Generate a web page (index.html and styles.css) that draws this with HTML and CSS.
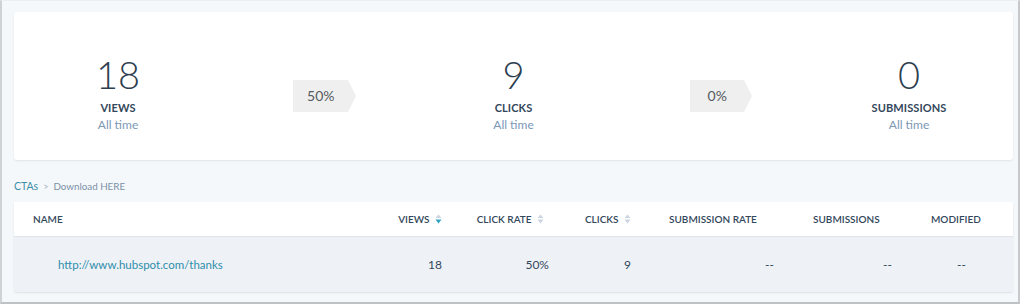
FILE: index.html
```html
<!DOCTYPE html>
<html lang="en">
<head>
<meta charset="utf-8">
<title>CTA performance</title>
<link rel="stylesheet" href="styles.css">
</head>
<body>
<div class="frame">
  <section class="summary">
    <div class="stat">
      <div class="num">18</div>
      <div class="label">VIEWS</div>
      <div class="sub">All time</div>
    </div>
    <div class="rate rate-1"><span class="badge">50%</span></div>
    <div class="stat">
      <div class="num">9</div>
      <div class="label">CLICKS</div>
      <div class="sub">All time</div>
    </div>
    <div class="rate rate-2"><span class="badge">0%</span></div>
    <div class="stat">
      <div class="num">0</div>
      <div class="label">SUBMISSIONS</div>
      <div class="sub">All time</div>
    </div>
  </section>

  <nav class="crumbs">
    <a class="crumb-link" href="#">CTAs</a>
    <span class="crumb-sep">&gt;</span>
    <span class="crumb-current">Download HERE</span>
  </nav>

  <div class="table">
    <div class="row head">
      <div class="cell c-name">NAME</div>
      <div class="cell c-views right">VIEWS
        <svg class="sort" viewBox="0 0 7 10" width="7" height="10"><path d="M3.5 0.5 L6.5 4 L0.5 4 Z" fill="#cbd6e2"/><path d="M0.5 5.5 L6.5 5.5 L3.5 9.5 Z" fill="#2fa5c4"/></svg>
      </div>
      <div class="cell c-rate right">CLICK RATE
        <svg class="sort" viewBox="0 0 7 10" width="7" height="10"><path d="M3.5 0.5 L6.5 4 L0.5 4 Z" fill="#cbd6e2"/><path d="M0.5 5.5 L6.5 5.5 L3.5 9.5 Z" fill="#cbd6e2"/></svg>
      </div>
      <div class="cell c-clicks right">CLICKS
        <svg class="sort" viewBox="0 0 7 10" width="7" height="10"><path d="M3.5 0.5 L6.5 4 L0.5 4 Z" fill="#cbd6e2"/><path d="M0.5 5.5 L6.5 5.5 L3.5 9.5 Z" fill="#cbd6e2"/></svg>
      </div>
      <div class="cell c-subrate">SUBMISSION RATE</div>
      <div class="cell c-subs">SUBMISSIONS</div>
      <div class="cell c-mod">MODIFIED</div>
    </div>
    <div class="row body">
      <div class="cell c-name"><a class="url" href="#">http://www.hubspot.com/thanks</a></div>
      <div class="cell c-views right">18</div>
      <div class="cell c-rate right v-rate">50%</div>
      <div class="cell c-clicks right">9</div>
      <div class="cell c-subrate right v-subrate">--</div>
      <div class="cell c-subs right v-subs">--</div>
      <div class="cell c-mod right v-mod">--</div>
    </div>
  </div>
</div>
</body>
</html>
```

FILE: styles.css
```css
* { box-sizing: border-box; }

html, body {
  margin: 0;
  padding: 0;
  background: #ffffff;
}

body {
  font-family: "Lato", "Open Sans", sans-serif;
  color: #33475b;
  width: 1024px;
  height: 307px;
  overflow: hidden;
}

.frame {
  width: 1020px;
  height: 304px;
  background: #f5f8fa;
  border-top: 1px solid #eceff2;
  border-left: 2px solid #cfd1d4;
  border-right: 2px solid #c6c8cb;
  border-bottom: 2px solid #bfc1c4;
  padding: 11px 5px 0 12px;
}

/* summary card */
.summary {
  background: #ffffff;
  border-radius: 3px;
  box-shadow: 0 1px 2px rgba(45, 62, 80, 0.10);
  height: 148px;
  display: grid;
  grid-template-columns: 208px 1fr 208px 1fr 208px;
  align-items: center;
}

.stat {
  display: flex;
  flex-direction: column;
  align-items: center;
  padding-top: 12px;
}

.num {
  font-size: 38px;
  font-weight: 300;
  line-height: 44px;
  color: #2d3e50;
}

.label {
  margin-top: 5px;
  font-size: 11px;
  font-weight: 700;
  line-height: 14px;
  letter-spacing: 0.1px;
  color: #33475b;
}

.sub {
  margin-top: 2px;
  font-size: 12px;
  line-height: 16px;
  color: #7c98b6;
}

.rate {
  display: flex;
  justify-content: center;
  padding-top: 20px;
}

.rate-1 { padding-left: 18px; }
.rate-2 { padding-left: 20px; }

.badge {
  position: relative;
  display: inline-block;
  height: 32px;
  line-height: 32px;
  background: #efefef;
  color: #555a60;
  font-size: 14px;
  text-align: center;
  margin-right: 8px;
}

.rate-1 .badge { width: 55px; }
.rate-2 .badge { width: 54px; }

.badge::after {
  content: "";
  position: absolute;
  right: -8px;
  top: 0;
  border-top: 16px solid transparent;
  border-bottom: 16px solid transparent;
  border-left: 8px solid #efefef;
}

/* breadcrumbs */
.crumbs {
  height: 42px;
  display: flex;
  align-items: center;
  gap: 5px;
  font-size: 10.5px;
  padding-top: 10px;
}

.crumb-link {
  color: #3b8fa8;
  text-decoration: none;
}

.crumb-sep {
  color: #a0b0c2;
  font-size: 9px;
}

.crumb-current {
  color: #7a90a8;
  font-size: 9.8px;
}

/* table */
.table {
  background: #eef2f6;
  border-radius: 3px;
  box-shadow: 0 1px 2px rgba(45, 62, 80, 0.12);
  width: 999px;
}

.row {
  display: grid;
  grid-template-columns: 369px 69px 107px 82px 149px 115px 108px;
  align-items: center;
}

.row.head {
  background: #ffffff;
  height: 35px;
  border-bottom: 1px solid #dfe3eb;
  font-size: 10px;
  font-weight: 600;
  color: #33475b;
}

.row.body {
  height: 55px;
  font-size: 12px;
  color: #33475b;
}

.cell {
  white-space: nowrap;
}

.right {
  text-align: right;
}

.head .c-name { padding-left: 19px; }
.head .c-views { padding-right: 10px; }
.head .c-rate { padding-right: 15px; }
.head .c-clicks { padding-right: 10px; }
.head .c-subrate { padding-left: 28px; }
.head .c-subs { padding-left: 23px; }
.head .c-mod { padding-left: 26px; }

.sort {
  display: inline-block;
  vertical-align: -1px;
  margin-left: 3px;
}

.body .c-name { padding-left: 44px; }
.body .c-views { padding-right: 10px; }
.body .v-rate { padding-right: 10px; }
.body .c-clicks { padding-right: 10px; }
.body .v-subrate { padding-right: 16px; }
.body .v-subs { padding-right: 13px; }
.body .v-mod { padding-right: 47px; }

.url {
  color: #2f8dab;
  text-decoration: none;
  font-size: 11.5px;
}
```
